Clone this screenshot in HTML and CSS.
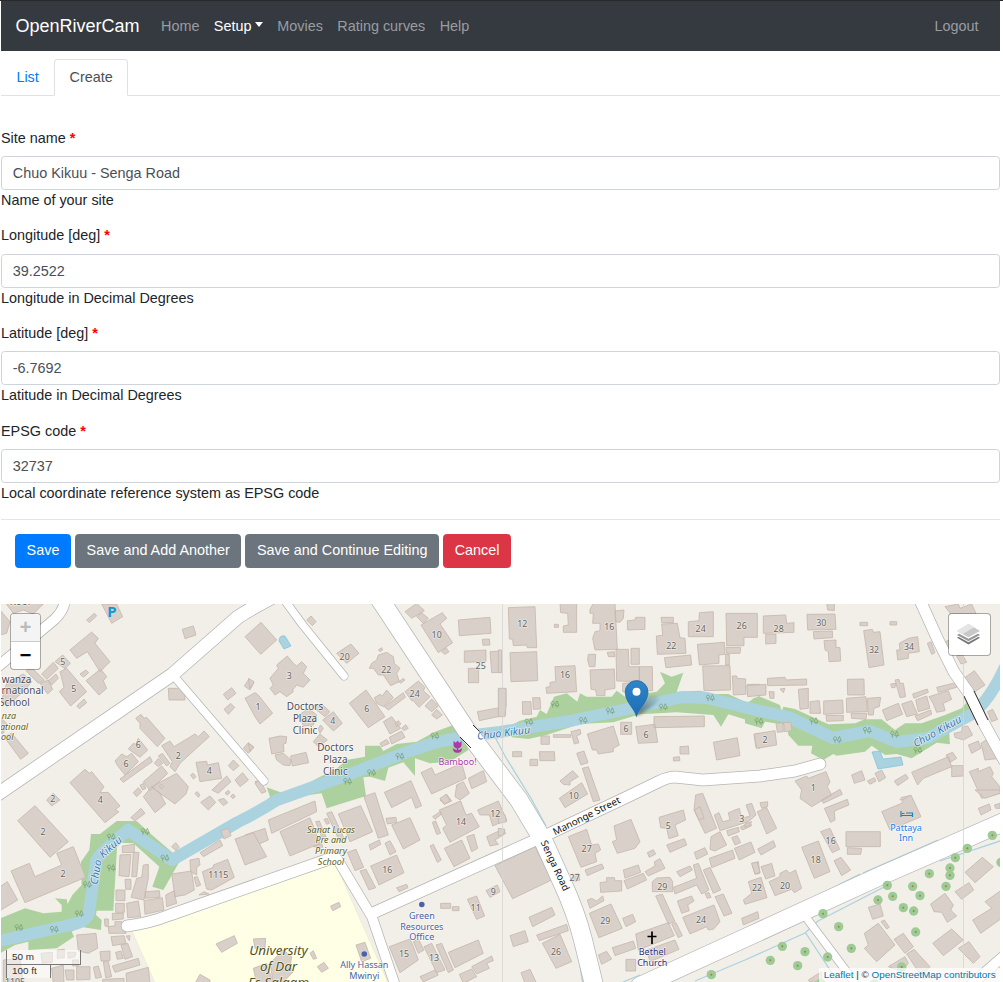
FILE: index.html
```html
<!DOCTYPE html>
<html lang="en">
<head>
<meta charset="utf-8">
<title>OpenRiverCam</title>
<link rel="stylesheet" href="styles.css">
</head>
<body>
<nav class="navbar">
  <a class="brand">OpenRiverCam</a>
  <a class="nav-item">Home</a>
  <a class="nav-item active">Setup<span class="caret"></span></a>
  <a class="nav-item">Movies</a>
  <a class="nav-item">Rating curves</a>
  <a class="nav-item">Help</a>
  <a class="nav-item logout">Logout</a>
</nav>
<ul class="tabs">
  <li class="tab">List</li>
  <li class="tab current">Create</li>
</ul>
<form class="form">
  <div class="group"><label>Site name <strong>*</strong></label><input type="text" value="Chuo Kikuu - Senga Road"><div class="help">Name of your site</div></div>
  <div class="group"><label>Longitude [deg] <strong>*</strong></label><input type="text" value="39.2522"><div class="help">Longitude in Decimal Degrees</div></div>
  <div class="group"><label>Latitude [deg] <strong>*</strong></label><input type="text" value="-6.7692"><div class="help">Latitude in Decimal Degrees</div></div>
  <div class="group"><label>EPSG code <strong>*</strong></label><input type="text" value="32737"><div class="help">Local coordinate reference system as EPSG code</div></div>
  <div class="actions">
    <button type="button" class="btn primary">Save</button>
    <button type="button" class="btn">Save and Add Another</button>
    <button type="button" class="btn">Save and Continue Editing</button>
    <button type="button" class="btn danger">Cancel</button>
  </div>
</form>
<div class="map">
<svg class="canvas" viewBox="1 604 999 378" width="999" height="378">
<defs>
  <g id="tr"><path d="M-7 11V-1M-7 3a5 5.500 0 1 1 .1 0M6 11V5M6-9L0 5h12z"/></g>
  <g id="t"><circle r="14"/><circle class="dot" r="3"/></g>
  <linearGradient id="pin" x1="0" y1="0" x2="0" y2="1"><stop offset="0" stop-color="#2e86c9"/><stop offset="1" stop-color="#1d6cb5"/></linearGradient>
  <linearGradient id="shade" x1="0" y1="1" x2="1" y2="0"><stop offset="0" stop-color="#000" stop-opacity=".5"/><stop offset="1" stop-color="#000" stop-opacity="0"/></linearGradient>
  <filter id="soft" x="-30%" y="-30%" width="160%" height="160%"><feGaussianBlur stdDeviation="1.600"/></filter>
  <path id="bend" d="M97.500 885L100.500 866Q101.500 859 107 855L126 838"/>
  <g id="roads">
  <path class="w10" d="M65 600Q64 610 55 619L-5 669M1005 955L965 990"/><path class="w8" d="M173 675L264 781M283 598L302 624 344 676M808 920L847 972 856 985"/><path class="w13" d="M-5 796L173 674 238 617Q250 609 275 596"/><path class="w11" d="M127 926Q150 923 170 915L332 858M373 913L540 838 627 797 658 782Q668 777 675 777L703 780 760 776 795 771 820 764M919 598L938 640 954 672 968 692 982 720 1004 760"/><path class="w9" d="M336 857L372 917 395 985"/><path class="w18" d="M379 598L467 731 519 800 543 840 562 882Q576 912 583 940L594 985M640 986L745 938 878 877 1006 821"/>
  </g>
</defs>
<path class="campus" d="M132 931L333 858 389 985H156z"/>
<g class="wood">
  <path transform="translate(0 790) scale(.33333)" d="M0 385L75 355 130 370 185 365 185 345 165 325 200 328 203 342 217 315 245 285 243 215 268 180 273 132 300 132 350 93 410 93 450 130 520 190 540 212 490 300 457 290 478 230 400 160 352 158 340 362 290 362 288 375 305 390 303 420 240 410 215 425 222 440 170 475 85 480 85 455 45 465 0 490z"/>
  <path transform="translate(250 600) scale(.33333)" d="M50 562L100 580 150 562 215 528 255 510 290 480 345 470 345 437 390 437 400 453 440 432 500 425 555 395 610 375 635 400 655 450 600 485 540 490 495 475 495 528 460 487 415 503 405 543 360 530 340 532 348 588 230 625 215 580 110 595 40 615 60 590z"/>
  <path transform="translate(500 600) scale(.33333)" d="M30 378L60 362 110 350 120 330 140 342 162 290 200 280 232 305 240 280 260 290 335 290 350 272 375 290 470 275 495 250 480 215 515 230 550 218 530 275 600 272 640 282 685 282 745 310 760 295 780 288 780 375 740 360 685 343 663 380 640 345 530 337 420 343 340 367 240 372 140 405 85 417 35 412z"/>
  <path transform="translate(745 600) scale(.33333)" d="M0 310L45 290 105 315 110 335 115 320 150 327 250 373 330 370 360 358 410 358 450 390 480 370 530 370 600 345 650 325 675 295 690 340 612 390 615 433 575 428 500 475 455 462 420 465 380 437 360 455 275 467 265 462 235 480 198 460 202 437 160 437 130 405 125 375 60 365 50 385 0 370z"/>
</g>
<path class="river" d="M-5 942L70 925Q87 922 89 912L96 862Q98 854 128 830L172 860 238 822Q260 811 277 800L353 773 407 752 437 742 475 735 500 732 570 721 637 707 683 697 707 698 760 711 788 717 833 738 870 731 897 742 928 738 972 714Q990 700 1005 667"/>
<path class="stream" d="M495 737L505 756 532 800 546 826M572 917L577 945 583 985M623 982L640 975M745 960L805 933 818 921M805 932L840 985M818 921L890 884M695 981L745 960M803 903L860 874M863 873L938 840M940 861L1003 840"/>
<path class="pool" d="M279 641Q279 635 285 636L291 646 284 649z M872 752L880 751 883 759 901 757 903 765 878 769z"/>
<g class="bldg" transform="translate(0 600) scale(.33333)"><path d="M10 0L130 12 100 42 70 30 40 40zM0 30L30 65 20 100 0 105zM260 60L283 40 290 48 268 68zM305 12L350 12 368 50 335 70zM547 88L580 78 588 105 555 116zM210 150L275 96 295 115 285 130 330 185 300 215 262 155 230 175zM165 185L188 165 211 190 195 206zM302 207L320 230 310 242 320 265 297 285 258 242zM78 212L95 203 133 240 115 250zM125 222L160 187 175 205 140 238zM145 242L168 222 175 235 155 255zM120 250L145 240 158 268 143 282zM240 222L258 210 266 218 250 232zM180 215L200 205 260 275 212 318 178 275 192 262zM230 318L252 297 260 308 238 326zM20 250L70 222 95 245 75 270 20 320 5 300zM12 410L35 400 85 460 62 478zM0 350L20 370 10 400 0 400zM505 265L553 265 555 300 507 300zM733 258L747 237 762 247 750 270zM670 283L695 263 708 280 683 300zM672 328L692 310 704 322 685 343zM730 445L745 428 762 442 745 460zM407 355L423 343 432 355 440 352 495 415 472 440 420 385 420 370zM385 447L400 430 407 433 415 415 443 450 420 472zM345 483L365 462 380 470 395 460 415 485 375 525 355 500zM360 537L450 470 457 485 370 547zM485 437L510 423 522 440 585 402 595 410 612 393 628 410 600 435 540 490 525 515 510 500 517 485zM463 490L475 475 488 490 475 500zM475 468L487 460 510 490 500 498zM588 487L620 484 622 495 655 488 665 535 600 545zM572 525L580 520 588 530 580 537zM430 545L485 498 503 520 450 572zM400 578L415 563 425 575 410 590zM420 556L430 550 438 565 428 570zM430 590L455 560 480 580 497 612 465 638zM455 560L530 520 565 560 558 582 525 612 480 580zM478 558L485 553 491 560 484 567zM685 497L700 480 717 497 700 512zM636 570L680 528 693 545 655 580zM705 540L728 518 745 540 720 560zM765 545L780 540 780 570zM585 580L592 575 600 585 595 592zM675 580L685 571 690 578 682 585zM210 548L255 508 268 520 275 515 312 560 300 578 325 577 360 618 345 630 357 635 315 668zM140 600L160 580 180 600 155 618z"/></g>
<g class="bldg" transform="translate(250 600) scale(.33333)"><path d="M-15 110L33 67 80 120 32 163zM170 60L183 48 198 65 187 77zM60 235L85 205 80 195 112 168 130 190 140 198 155 185 170 200 160 220 180 240 160 262 140 255 128 270 130 275 110 290 90 275 75 285 60 265 70 255zM260 160L303 132 327 160 290 190zM365 190L380 180 385 165 410 157 430 170 433 190 450 205 440 220 448 245 422 257 400 225 385 225 370 205 358 205zM385 150L395 143 398 150 390 155zM447 245L460 235 465 240 452 250zM465 275L505 243 525 262 520 272 540 290 507 322 490 302 485 302zM525 318L545 297 565 318 545 335zM545 345L560 328 577 345 560 357zM298 310L348 270 405 350 355 383zM373 293L390 283 397 288 410 270 430 293 400 320 380 310zM403 320L460 278 466 292 415 330zM400 365L425 350 452 385 420 402zM455 385L467 374 475 385 462 392zM418 412L455 393 465 412 425 432zM390 430L410 418 418 430 395 440zM435 370L445 362 453 372 440 380zM-15 295L15 278 25 285 68 340 30 372 15 350zM148 345L175 325 200 345 190 375 160 378zM185 318L215 312 240 335 225 350zM218 360L250 335 277 370 250 393zM205 385L212 375 220 385 210 400zM190 425L210 402 232 420 205 440zM57 415L90 408 110 410 108 430 100 432 102 455 65 462zM75 465L100 460 123 480 120 497 100 495 80 480zM122 468L168 457 176 488 127 498zM15 550L30 540 48 575 35 580zM-5 430L10 440 0 455zM-5 235L12 245 0 265zM465 35L500 10 523 32 485 55zM500 50L515 38 535 55 520 70zM513 75L577 38 590 55 570 72 608 128 565 158zM575 155L588 143 597 155 585 163zM625 60L720 52 723 100 628 107zM697 118L718 117 720 135 699 136zM643 153L708 150 708 185 643 187zM655 205L686 205 686 248 655 248zM720 155L752 153 755 217 725 218zM745 268L768 266 768 320 748 322zM682 335L765 320 767 345 688 362zM513 518L545 503 555 525 635 490 648 535 545 582zM655 535L700 512 710 545 665 566zM403 577L483 542 515 617 497 625 485 592 425 623zM620 555L640 545 658 580 630 600 615 590zM570 600L590 583 605 603 583 613zM342 590L375 578 415 705 385 715z"/></g>
<g class="bldg" transform="translate(250 790) scale(.33333)"><path d="M55 90L195 33 200 65 65 130zM90 125L180 83 210 160 120 198zM-15 135L45 115 55 150 20 165 30 205 -10 220zM230 70L245 65 282 145 268 152zM222 88L232 85 238 100 230 103zM197 95L208 93 228 140 215 142zM190 170L215 160 218 172zM265 72L332 47 368 125 300 155zM425 105L480 83 510 150 460 177zM408 85L438 82 440 97 412 102zM357 165L388 150 392 163 362 180zM405 160L420 152 438 185 420 195zM292 187L318 178 341 232 315 242zM330 243L348 238 377 293 357 300zM362 228L440 195 462 248 387 285zM440 293L470 283 474 293 447 305zM242 348L267 337 272 350 248 362zM568 60L632 33 648 75 665 70 688 110 600 157 578 115 590 105zM548 80L570 65 575 72 555 88zM547 97L557 93 572 130 560 133zM683 60L745 33 770 90 728 108 718 75 690 75zM583 175L635 150 660 205 612 230zM650 140L672 133 683 175 665 185zM710 140L760 117 767 130 735 150 745 163 720 168zM540 168L550 163 574 210 562 217zM570 25L588 13 600 32 583 43zM708 302L742 285 750 305 720 322zM652 328L680 318 704 378 680 388zM572 340L602 340 602 355 572 355zM607 350L627 350 627 362 607 362zM418 470L480 447 490 470 505 510 450 548zM490 455L505 447 522 480 505 490zM522 470L545 460 585 540 560 548zM558 465L575 460 610 540 595 548zM595 487L685 450 700 490 615 533zM665 530L725 498 730 512 710 520 718 535 680 552zM510 560L555 540 565 555 520 576zM628 553L665 537 680 560 640 580zM10 447L47 445 45 475 15 475zM180 490L190 482 200 505 190 508zM202 530L222 517 235 535 215 547zM318 465L345 457 362 505 335 515zM60 520L100 480 125 500 120 530 130 545 100 576 70 580zM10 535L50 520 70 580 20 580z"/></g>
<g class="bldg" transform="translate(500 600) scale(.33333)"><path d="M25 23L105 20 110 143 82 143 80 135 40 137 38 118 28 117zM30 158L110 155 113 242 33 245zM180 10L230 10 230 97 190 97 190 78 205 75 203 40 182 38zM163 73L175 73 175 82 163 82zM270 28L280 10 345 10 352 148 285 150 278 115 285 95 300 92 300 70 278 70 280 40 270 40zM345 33L372 30 370 55 360 67 347 65zM382 62L405 60 407 52 435 52 435 88 383 90zM483 52L520 52 520 68 485 68zM485 72L532 70 540 113 555 115 558 160 472 163 469 108 488 106zM565 65L597 62 598 38 640 35 640 110 565 110zM678 40L772 40 772 112 732 112 732 137 680 137zM678 142L722 142 720 160 680 160zM592 133L673 127 675 163 657 165 657 190 598 195zM677 163L688 163 688 195 677 195zM493 173L572 165 575 195 498 203zM608 198L690 197 692 270 612 272zM697 228L710 228 712 235 737 237 737 283 700 285zM742 253L780 253 780 287 742 285zM265 163L287 163 285 200 268 200 263 180zM322 157L343 155 345 170 325 170zM348 148L385 148 387 200 418 200 418 245 350 243zM393 145L418 145 418 193 393 193zM418 200L457 200 458 272 418 272zM368 250L400 248 400 280 368 275zM270 210L343 207 345 265 315 270 315 287 290 287 287 270 273 268zM165 200L225 197 230 275 140 280 138 262 150 260 150 247 167 245zM-5 265L18 265 18 320 15 350 -5 350zM-5 150L5 150 5 218 -5 218zM67 305L93 305 95 343 68 343zM98 293L120 293 122 327 100 328zM123 408L148 408 148 433 123 433zM160 404L212 404 212 412 160 412zM213 395L240 388 243 402 230 408 237 428 223 432zM38 455L65 455 65 470 38 470zM118 455L163 455 165 482 120 482zM90 478L113 478 113 497 90 497zM262 402L340 378 358 435 340 445 340 455 295 462 290 450 277 450zM362 367L395 367 395 403 362 403zM407 380L465 373 473 427 415 430zM462 350L613 348 613 380 462 383zM640 427L712 413 720 467 650 480zM540 440L565 438 567 462 540 462zM520 472L538 470 540 482 520 483zM762 403L780 400 780 445 768 443zM230 460L252 453 264 488 243 495zM247 505L265 500 300 600 280 605zM180 543L218 512 235 530 210 545 210 555 190 553zM178 595L245 548 263 582 195 623zM587 588L605 582 615 600 592 600z"/></g>
<g class="bldg" transform="translate(500 790) scale(.33333)"><path d="M-15 227L105 170 155 270 38 326zM205 140L260 118 275 165 295 162 302 180 285 190 290 215 243 232zM255 240L305 222 312 235 262 257zM342 108L393 88 420 155 405 175 352 190 337 155 350 150zM300 278L320 275 320 263 343 263 345 272 365 272 365 303 302 307zM370 240L415 225 422 247 375 265zM372 272L430 250 440 270 382 297zM435 245L465 228 463 215 480 206 495 235 445 258zM442 188L460 179 467 192 448 202zM477 82L550 60 557 90 525 105 535 137 507 146 500 115 482 113zM500 165L553 146 560 165 510 187zM583 187L615 173 623 192 590 208zM587 15L608 10 650 115 615 130 582 60zM583 60L600 50 612 85 597 90zM643 75L657 68 668 95 690 90 685 68 718 55 725 85 750 78 738 45 755 40 768 75 745 95 660 122zM680 122L715 112 718 125 685 138zM720 112L750 97 755 107 727 120zM695 143L712 137 722 158 705 165zM633 140L660 125 680 165 645 183 630 178zM628 205L698 180 705 205 635 233zM703 175L753 156 765 187 718 210zM520 292L590 265 580 225 595 220 627 300 605 312 590 285 525 312zM530 245L570 228 577 240 540 260zM610 240L630 232 662 300 640 310zM615 310L627 308 633 322 622 325zM645 320L670 312 696 370 672 378zM457 275L470 264 510 262 518 275 518 305 457 305zM268 370L333 342 367 415 297 443zM262 330L275 325 290 333 308 318 312 332 270 355zM368 385L398 373 407 395 378 410zM467 318L487 312 525 395 505 402zM407 432L505 398 523 437 415 480zM515 403L528 398 547 437 535 443zM440 480L525 450 537 478 450 515zM532 333L575 318 582 333 563 345 568 362 545 370zM548 382L642 345 660 395 640 418 625 420 620 410 570 432zM337 473L400 453 407 475 345 497zM295 495L320 484 335 507 305 523zM378 508L407 508 407 543 378 543zM87 382L155 352 165 375 98 410zM110 435L200 403 205 422 118 452zM127 460L180 433 215 515 168 535zM30 437L75 422 85 455 40 470zM63 548L90 538 110 580 75 580zM755 220L775 215 780 250 765 253zM218 255L235 250 240 270 225 275zM-5 60L15 75 20 95 -5 100zM-5 115L15 118 10 135 -5 138z"/></g>
<g class="bldg" transform="translate(745 600) scale(.33333)"><path d="M55 48L122 45 125 70 147 68 147 97 55 100zM62 103L93 103 93 130 62 132zM245 10L268 10 268 32 248 30zM186 43L270 42 273 88 188 90zM205 95L262 93 263 113 207 117zM237 122L273 120 273 142 285 143 287 183 252 185 250 155 240 150zM345 67L368 67 368 77 345 77zM435 65L455 65 455 75 435 75zM356 92L382 88 385 97 405 95 417 195 372 203zM455 150L465 150 463 130 490 115 518 110 523 155 490 160 490 175 458 180zM600 20L640 12 645 25 680 12 695 45 620 45zM547 130L558 125 570 158 560 163zM635 168L652 163 665 187 648 192zM600 125L615 120 620 150 605 150zM67 235L120 232 123 240 185 237 185 255 68 257zM5 257L63 253 63 285 8 290zM72 275L87 275 87 295 75 295zM105 267L120 265 115 278zM160 268L190 265 190 325 165 328zM195 305L223 302 227 340 195 340zM236 303L293 300 295 340 236 343zM243 346L295 346 295 362 245 364zM307 238L357 237 358 285 308 285zM304 295L363 290 367 335 305 337zM318 340L365 340 363 358 320 355zM367 295L407 292 403 320 387 325 385 345 370 345zM412 330L460 310 473 343 425 362zM470 312L500 302 517 342 485 350zM437 252L452 250 450 263 440 263zM450 240L462 238 465 250 475 250 482 290 465 293zM503 282L547 267 550 277 507 295zM512 300L545 288 555 325 520 335zM510 348L557 330 560 343 518 362zM552 290L610 272 620 298 595 310 600 332 575 337 565 312zM575 262L632 248 635 262 580 277zM657 235L688 212 720 255 690 275zM728 335L743 328 758 358 740 365zM627 400L650 395 652 380 668 378 683 405 655 420 630 412zM670 435L700 423 708 445 680 460zM708 430L735 412 765 470 765 475 720 480zM93 370L113 368 115 395 97 397zM116 368L138 367 140 392 118 395zM28 402L90 392 95 435 35 445zM320 525L350 512 360 540 328 550zM367 543L388 533 393 543 375 553zM390 520L410 510 422 533 402 545zM448 543L482 523 490 535 458 557zM500 517L610 470 620 500 535 535 518 555zM603 465L623 457 635 475 615 487zM620 497L655 497 655 528 620 530zM673 515L700 505 700 515 735 500 745 520 740 530 765 560 765 580 710 595zM150 543L185 528 190 535 243 515 255 545 247 560 260 585 200 620 165 595 170 570zM230 600L285 568 292 583 235 610zM470 592L495 587 502 600 465 600z"/></g>
<g class="bldg" transform="translate(745 790) scale(.33333)"><path d="M238 55L307 28 312 45 268 63 270 90 257 97zM410 65L470 40 475 28 498 15 528 80 435 120zM303 125L406 125 406 170 303 170zM307 173L350 175 347 193 307 193zM227 125L255 115 284 178 262 188zM170 172L220 153 255 245 208 265zM267 212L288 202 317 240 290 257zM37 65L65 53 95 115 65 132zM45 38L68 35 68 50 50 55zM0 102L20 95 15 105 0 112zM38 177L85 152 92 170 48 195zM20 220L37 217 45 247 30 252zM48 230L80 220 90 258 62 267zM72 275L105 260 105 250 125 240 133 250 152 240 170 295 148 308 140 298 90 317zM10 275L48 262 66 323 0 343 -5 330 20 310zM-10 385L38 365 42 385 -5 405zM370 352L405 342 415 378 383 388zM408 395L418 390 433 412 425 417zM358 430L400 400 450 465 395 515 358 475 370 465zM447 448L475 430 505 470 480 490zM485 492L507 478 555 530 530 560zM430 530L480 500 490 520 470 545zM190 570L230 545 230 576 195 576zM557 342L600 310 625 345 617 360 635 378 607 397 590 367 567 365zM660 247L712 202 745 230 690 278zM630 305L672 278 686 300 650 328zM563 460L620 417 655 450 595 497zM640 475L672 455 705 500 685 520zM683 390L740 355 720 335 770 300 770 385 707 430zM700 55L733 42 738 60 708 75zM690 0L765 0 765 10 720 25zM748 45L765 40 765 55 752 55z"/></g>
<g class="bldg" transform="translate(0 790) scale(.33333)"><path d="M53 92L105 47 205 155 150 202zM33 243L88 220 105 260 185 225 170 190 220 170 257 262 75 338zM0 290L22 275 53 330 0 362zM392 83L423 55 435 70 405 92zM515 170L527 158 538 172 528 182zM602 37L630 18 647 37 625 60zM655 30L672 25 683 38 670 47zM692 18L700 12 706 20 698 26zM663 122L685 115 693 137 672 147zM600 188L660 150 668 167 610 200zM705 147L760 128 800 200 735 225zM570 210L597 205 600 225 590 232 590 255 572 245zM582 262L592 260 602 285 590 290zM607 245L640 232 640 225 683 208 703 262 635 300 620 297zM515 252L575 243 583 300 555 315 525 320zM597 315L612 305 627 312zM497 315L522 302 530 340 500 350zM432 332L487 323 492 360 435 373zM435 305L478 302 480 322 437 325zM367 168L403 163 403 187 367 188zM360 195L393 193 387 260 357 257zM400 187L417 187 410 260 395 260zM375 268L393 268 393 298 377 298zM393 322L410 265 425 262 430 225 445 223 445 265 432 330zM348 300L375 300 375 332 348 332zM347 340L373 340 373 367 347 367zM380 340L415 333 422 380 383 383zM337 370L370 370 370 387 337 390zM313 387L325 387 325 410 315 408zM325 410L345 407 345 395 365 395 378 430 327 430zM333 440L372 437 378 460 338 467zM378 438L390 437 388 452zM363 465L383 460 398 500 375 508zM230 435L288 430 293 475 265 490 235 483zM300 485L330 483 330 512 303 513zM347 487L363 483 370 505 352 508zM337 528L415 505 420 525 345 547zM310 515L325 515 335 560 317 563zM280 532L295 528 305 562 287 565zM378 550L445 532 450 580 380 580zM308 568L372 565 372 580 308 580zM230 530L270 530 270 568 230 570zM195 540L222 540 222 570 200 570zM155 535L190 525 192 580 160 580zM123 490L157 487 157 517 127 520zM172 480L193 478 193 503 172 505zM203 487L228 487 225 500 205 505zM218 510L235 510 235 528 218 528zM10 510L60 505 70 580 10 580zM648 462L703 437 712 460 665 487zM585 580L600 553 630 570 630 580z"/></g>
<use class="roads case" href="#roads"/>
<use class="roads" href="#roads"/>
<path class="bridge" d="M964 696L978 725M974 691L988 720M460 737L471 748M473 725L480 732"/>
<path class="seam" d="M502.500 604V982M963.500 604V982"/>
<g class="trees" transform="translate(0 790) scale(.33333)"><use href="#tr" x="57" y="412"/><use href="#tr" x="163" y="417"/><use href="#tr" x="238" y="370"/><use href="#tr" x="262" y="283"/><use href="#tr" x="334" y="233"/><use href="#tr" x="334" y="140"/><use href="#tr" x="436" y="124"/><use href="#tr" x="495" y="203"/></g>
<g class="trees" transform="translate(250 600) scale(.33333)"><use href="#tr" x="293" y="543"/><use href="#tr" x="365" y="517"/><use href="#tr" x="450" y="468"/><use href="#tr" x="555" y="407"/></g>
<g class="trees" transform="translate(500 600) scale(.33333)"><use href="#tr" x="87" y="365"/><use href="#tr" x="165" y="312"/><use href="#tr" x="250" y="360"/><use href="#tr" x="331" y="332"/><use href="#tr" x="490" y="320"/><use href="#tr" x="631" y="293"/></g>
<g class="trees" transform="translate(745 600) scale(.33333)"><use href="#tr" x="42" y="363"/><use href="#tr" x="207" y="362"/><use href="#tr" x="277" y="418"/><use href="#tr" x="367" y="390"/><use href="#tr" x="449" y="402"/><use href="#tr" x="519" y="450"/></g>
<g class="dots" transform="translate(745 790) scale(.33333)"><use href="#t" x="742" y="136"/><use href="#t" x="667" y="175"/><use href="#t" x="631" y="203"/><use href="#t" x="615" y="234"/><use href="#t" x="615" y="256"/><use href="#t" x="553" y="251"/><use href="#t" x="603" y="289"/><use href="#t" x="503" y="289"/><use href="#t" x="427" y="286"/><use href="#t" x="443" y="319"/><use href="#t" x="525" y="317"/><use href="#t" x="399" y="330"/><use href="#t" x="475" y="353"/><use href="#t" x="506" y="363"/><use href="#t" x="234" y="371"/><use href="#t" x="281" y="410"/><use href="#t" x="512" y="426"/><use href="#t" x="319" y="475"/><use href="#t" x="112" y="469"/><use href="#t" x="180" y="485"/><use href="#t" x="76" y="511"/><use href="#t" x="158" y="527"/><use href="#t" x="248" y="501"/><use href="#t" x="470" y="531"/><use href="#t" x="768" y="217"/><use href="#t" x="-101" y="554"/><use href="#t" x="388" y="582"/><use href="#t" x="227" y="580"/></g>
<g class="num" transform="translate(0 600) scale(.33333)"><text x="188" y="196">5</text><text x="221" y="275">5</text><text x="415" y="444">6</text><text x="378" y="501">6</text><text x="535" y="477">2</text><text x="628" y="523">4</text><text x="774" y="330">1</text><text x="158" y="607">2</text><text x="301" y="610">4</text><text x="129" y="704">2</text><text x="189" y="830">2</text><text x="655" y="835">1115</text><text x="45" y="1156">1105</text></g>
<g class="num" transform="translate(250 600) scale(.33333)"><text x="118" y="237">3</text><text x="284" y="180">20</text><text x="409" y="218">22</text><text x="494" y="291">24</text><text x="350" y="336">6</text><text x="248" y="372">4</text><text x="560" y="114">10</text><text x="692" y="206">25</text><text x="633" y="674">14</text><text x="736" y="650">12</text><text x="412" y="819">16</text><text x="730" y="884">9</text><text x="677" y="933">11</text><text x="462" y="1070">15</text><text x="552" y="1083">13</text></g>
<g class="num" transform="translate(500 600) scale(.33333)"><text x="67" y="81">12</text><text x="328" y="89">16</text><text x="514" y="146">22</text><text x="602" y="95">24</text><text x="725" y="88">26</text><text x="195" y="233">16</text><text x="378" y="395">6</text><text x="438" y="413">6</text><text x="221" y="598">10</text><text x="505" y="686">5</text><text x="725" y="665">3</text><text x="260" y="755">27</text><text x="224" y="842">27</text><text x="487" y="869">29</text><text x="316" y="973">29</text><text x="603" y="968">24</text><text x="168" y="1064">26</text></g>
<g class="num" transform="translate(745 600) scale(.33333)"><text x="101" y="95">28</text><text x="229" y="77">30</text><text x="387" y="158">32</text><text x="492" y="149">34</text><text x="60" y="428">2</text><text x="205" y="572">1</text><text x="257" y="732">16</text><text x="212" y="790">18</text><text x="36" y="872">22</text><text x="120" y="866">20</text></g>
<g class="place">
  <text x="305" y="710">Doctors</text><text x="305" y="722">Plaza</text><text x="305" y="734">Clinic</text>
  <text x="335.300" y="751">Doctors</text><text x="335.300" y="763">Plaza</text><text x="335.300" y="775">Clinic</text>
  <text class="s" x="1.700" y="682.500">wanza</text><text class="s" x="1.500" y="694">rnational</text><text class="s" x="-1" y="706">School</text><text x="20" y="605">Kool</text>
</g>
<g class="school"><text class="s" x="1.700" y="719">nza</text><text class="s" x="0" y="729.500">ational</text><text class="s" x="1" y="740">ool</text><text x="331" y="832.500">Sanat Lucas</text><text x="331" y="843">Pre and</text><text x="331" y="854">Primary</text><text x="331" y="864.500">School</text></g>
<g class="uni"><text x="278.500" y="955">University</text><text x="278.500" y="971">of Dar</text><text x="278.500" y="987">Es Salaam</text></g>
<g class="office"><circle cx="421.800" cy="904.500" r="2.800"/><circle cx="364.300" cy="954" r="2.800"/><text x="421.800" y="919">Green</text><text x="421.800" y="929.500">Resources</text><text x="421.800" y="940">Office</text><text x="364.300" y="968">Ally Hassan</text><text x="364.300" y="978.500">Mwinyi</text></g>
<g class="church"><text x="652.300" y="955">Bethel</text><text x="652.300" y="965.800">Church</text></g><path class="cross" d="M652 931.500V944M647.500 936.500H656.500"/>
<g class="inn"><text x="906" y="830.500">Pattaya</text><text x="906" y="841">Inn</text></g>
<path class="bed" d="M901 811V817M901 815.500H912.500M912.500 812.500V817M902 813.500H904.500M906 813H912.500"/>
<text class="bamboo" x="457.500" y="764.500">Bamboo!</text>
<path class="tulip" d="M453.500 741l2.300 1.700 1.800-2 1.800 2 2.200-1.700v4q-.5 3-3.300 3.200v2l4-2q-1 5-4.800 4.500-4 .5-4.800-4.500l4 2v-2q-2.800-.2-3.200-3.200z"/>
<text class="parking" x="112" y="616.500">P</text>
<g class="water"><text transform="translate(504 736.500) rotate(-7)">Chuo Kikuu</text><text transform="translate(939 734.500) rotate(-29)">Chuo Kikuu</text><text class="s"><textPath href="#bend">Chuo Kikuu</textPath></text></g>
<g class="street"><text transform="translate(588 819) rotate(-26.500)">Manonge Street</text><text transform="translate(552 867) rotate(65)">Senga Road</text></g>
<path class="shadow" d="M637 716Q638 704 650 696 660 693 660 697 659 704 637 716z"/>
<path class="marker" d="M636.500 716.500C635 709 625.200 702 625.200 692a11.400 11.400 0 0 1 22.800 0C648 702 638 709 636.500 716.500z"/><circle cx="636.500" cy="691.800" r="4" fill="#fff"/>
</svg>
<div class="zoomctl"><span class="off">+</span><span>−</span></div>
<div class="layers"><svg viewBox="0 0 26 26" width="25" height="25"><path fill="#777" d="M1 17.500L13 11 25 17.500 13 24.500z"/><path fill="#fff" d="M1 15.500L13 9 25 15.500 13 22z"/><path fill="#999" d="M1 14.500L13 7 25 14.500 13 21z"/><path fill="#fff" d="M1 12L13 5 25 12 13 18.500z"/><path fill="#c8c8c8" d="M1 10.500L13 3 25 10.500 13 17z"/><path fill="#e5e5e5" d="M1 10.500L13 3 19 6.500 7 13.500z"/></svg></div>
<div class="scale"><div class="m"><span>50 m</span></div><div class="ft"><span>100 ft</span></div></div>
<div class="credit"><span><a>Leaflet</a> | © <a>OpenStreetMap contributors</a></span></div>
</div>
</body>
</html>
```
FILE: styles.css
```css
* { box-sizing: border-box; }
html { font-size: 14.4px; }
body { margin: 0; padding: 0 3px 0 1px; height: 982px; overflow: hidden; border-top: 1px solid #292929; background: #fff; color: #212529; font: 14.4px/21.6px "Liberation Sans", Arial, sans-serif; }
.navbar { display: flex; align-items: center; height: 50px; padding: 0 14.4px; background: #343a40; }
.brand { color: #fff; font-size: 18px; line-height: 27px; margin-right: 14.4px; }
.nav-item { padding: 1px 7.2px 0; color: #9a9da0; }
.nav-item.active { color: #fff; }
.logout { margin-left: auto; }
.caret { display: inline-block; margin-left: 3.6px; vertical-align: 3.7px; border: 4.6px solid transparent; border-width: 5px 4.6px 0; border-top-color: #fff; }
.tabs { display: flex; list-style: none; margin: 8px 0 0; padding: 0; height: 37px; border-bottom: 1px solid #dee2e6; }
.tab { height: 37px; padding: 7px 14.4px; border: 1px solid transparent; color: #007bff; }
.tab.current { background: #fff; border-color: #dee2e6 #dee2e6 #fff; border-radius: 3.6px 3.6px 0 0; color: #495057; }
.form { padding-top: 31.55px; }
.group { height: 97.7px; display: flex; flex-direction: column; }
.group label { display: block; height: 21.6px; margin-bottom: 6.9px; }
.group strong { color: #f00; }
.group input { width: 100%; height: 34px; flex: none; padding: 0 10.8px; border: 1px solid #ced4da; border-radius: 3.6px; background: #fff; color: #495057; font: inherit; }
.help { height: 21.6px; }
.actions { display: flex; gap: 4px; height: 85px; padding: 14px 14px 0; border-top: 1px solid #e5e5e5; margin-top: .65px; }
.btn { height: 34px; padding: 0 10.6px 1px; border: 1px solid #6c757d; border-radius: 3.6px; background: #6c757d; color: #fff; font: inherit; white-space: nowrap; }
.btn.primary { background: #007bff; border-color: #007bff; }
.btn.danger { background: #dc3545; border-color: #dc3545; }
.map { position: relative; height: 378px; overflow: hidden; background: #f2efe9; }
.canvas { display: block; font-family: "Noto Sans", "Open Sans", sans-serif; }
.campus { fill: #ffffe5; stroke: #e8e4c4; stroke-width: .5; }
.wood { fill: #add19e; }
.river { fill: none; stroke: #aad3df; stroke-width: 12; stroke-linejoin: round; }
.stream { fill: none; stroke: #aad3df; stroke-width: 1.3; }
.pool { fill: #aad3df; stroke: #78c1de; stroke-width: .7; }
.bldg { fill: #d9d0c9; stroke: #c5b8ad; stroke-width: 2.5; }
.roads { --edge: 0px; fill: none; stroke: #fff; stroke-linecap: round; stroke-linejoin: round; }
.case { --edge: 1.5px; stroke: #b5b5b5; }
.w8 { stroke-width: calc(7.5px + var(--edge)); }
.w9 { stroke-width: calc(9.5px + var(--edge)); }
.w10 { stroke-width: calc(10px + var(--edge)); }
.w11 { stroke-width: calc(11px + var(--edge)); }
.w13 { stroke-width: calc(13px + var(--edge)); }
.w18 { stroke-width: calc(18px + var(--edge)); }
.bridge { fill: none; stroke: #333; stroke-width: 1; }
.seam { stroke: #d5d3d0; stroke-width: .8; }
.trees { fill: none; stroke: #6f9a68; stroke-width: 2; }
.dots { fill: #9ccb95; }
.dot { fill: #b17b45; }
.canvas text { text-anchor: middle; paint-order: stroke; stroke: rgba(255,255,255,.65); stroke-width: 1.5px; stroke-linejoin: round; }
.canvas text.s { text-anchor: start; }
.num { font-size: 26.5px; fill: #666; }
.canvas .num text { stroke-width: 5px; stroke: rgba(240,235,230,.8); }
.place { font-size: 9.9px; fill: #4d4d55; }
.school { font-size: 9px; font-style: italic; fill: #5d6120; }
.uni { font-size: 13.4px; font-style: italic; fill: #50511a; }
.office { font-size: 9px; fill: #4863a8; }
.church { font-size: 9px; fill: #35307a; }
.cross { stroke: #000; stroke-width: 1.7; }
.inn { font-size: 9px; fill: #2480ed; }
.bed { fill: none; stroke: #1586b8; stroke-width: 1.2; }
.bamboo { font-size: 9px; fill: #ac39ac; }
.tulip { fill: #ac39ac; }
.canvas .parking { font: bold 15px "Noto Sans", sans-serif; fill: #1598d4; stroke: none; }
.water { font-size: 10.6px; font-style: italic; fill: #4178ae; }
.street { font-size: 9.8px; fill: #111; }
.shadow { fill: url(#shade); filter: url(#soft); }
.marker { fill: url(#pin); stroke: #2467a0; stroke-width: .8; }
.zoomctl { position: absolute; left: 9px; top: 9px; width: 31px; height: 57px; border: 1px solid rgba(0,0,0,.3); border-radius: 4px; overflow: hidden; background: #fff; background-clip: padding-box; font: bold 20px/27px "Liberation Mono", monospace; text-align: center; color: #000; }
.zoomctl span { display: block; height: 27px; line-height: 29px; }
.zoomctl .off { height: 28px; border-bottom: 1px solid #ccc; background: #f4f4f4; color: #bbb; }
.layers { position: absolute; left: 947px; top: 9px; width: 43px; height: 43px; padding: 7px; border: 1px solid rgba(0,0,0,.3); border-radius: 4px; background: #fff; background-clip: padding-box; }
.scale { position: absolute; left: 5px; top: 346px; font-size: 9.9px; line-height: 12px; color: #333; }
.m, .ft { border: 1px solid #777; border-top: 0; background: rgba(255,255,255,.5); padding-left: 5px; white-space: nowrap; }
.m { width: 75px; height: 15px; padding-top: 1px; }
.ft { width: 45px; height: 13px; border-bottom: 0; }
.credit { position: absolute; right: 0; bottom: 0; height: 14px; width: 181px; padding-left: 4.8px; background: rgba(255,255,255,.7); font-size: 9.9px; line-height: 14px; color: #333; white-space: nowrap; }
.credit a { color: #0078a8; }
```
